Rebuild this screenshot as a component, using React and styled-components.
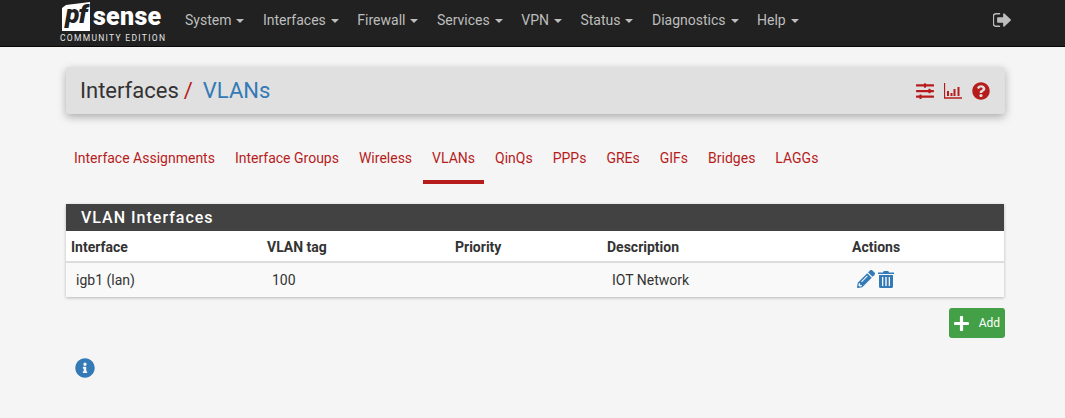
import React from 'react'
import styled, { createGlobalStyle } from 'styled-components'
import { FaSlidersH, FaQuestionCircle, FaPencilAlt, FaPlus, FaInfoCircle } from 'react-icons/fa'

const GlobalStyle = createGlobalStyle`
	html, body {
		margin: 0;
		padding: 0;
		background: #f5f5f5;
		font-family: Roboto, "Liberation Sans", sans-serif;
		font-size: 14px;
		color: #333;
	}
`

const Page = styled.div`
	width: 1065px;
	height: 418px;
	overflow: hidden;
`

const NavBar = styled.nav`
	height: 46px;
	background: #212121;
	border-bottom: 1px solid #080808;
	display: flex;
	align-items: flex-start;
	padding-left: 60px;
	padding-right: 54px;
`

const Logo = styled.div`
	width: 106px;
	height: 46px;
	color: #fff;
	flex: none;
`

const LogoMark = styled.div`
	display: flex;
	align-items: flex-start;
	height: 31px;
	padding: 2px 0 0 2px;
`

const LogoBox = styled.span`
	width: 28px;
	height: 29px;
	background: #fff;
	color: #212121;
	font: italic 900 26px/25px Roboto, sans-serif;
	letter-spacing: -1px;
	text-align: center;
	clip-path: polygon(4px 3px, 28px 0, 28px 29px, 0 29px, 0 6px);
`

const LogoWord = styled.span`
	font: 900 25px/30px Roboto, sans-serif;
	margin-left: 3px;
	letter-spacing: 0.3px;
`

const LogoEdition = styled.div`
	font: 400 8.5px/10px Roboto, sans-serif;
	letter-spacing: 1.3px;
	white-space: nowrap;
	color: #e4e4e4;
`

const NavMenu = styled.ul`
	display: flex;
	list-style: none;
	margin: 0 0 0 9.75px;
	padding: 0;
	flex: 1;
`

const NavItem = styled.li`
	padding: 0 9.25px;
	line-height: 41px;
	color: #bdbdbd;
	white-space: nowrap;
`

const Caret = styled.span`
	display: inline-block;
	width: 0;
	height: 0;
	margin-left: 5px;
	vertical-align: middle;
	border-top: 4px solid #bdbdbd;
	border-left: 4px solid transparent;
	border-right: 4px solid transparent;
`

const Logout = styled.div`
	color: #bdbdbd;
	height: 39px;
	display: flex;
	align-items: center;
`

const Content = styled.main`
	padding: 20px 0 0 66px;
	width: 938px;
`

const TitleBar = styled.header`
	height: 47px;
	margin-right: -1px;
	background: #e0e0e0;
	border-radius: 3px;
	box-shadow: 0 3px 8px rgba(0, 0, 0, 0.3);
	display: flex;
	align-items: center;
	justify-content: space-between;
	padding: 0 15px 0 14px;
`

const Crumbs = styled.h1`
	margin: 0;
	font-size: 22px;
	font-weight: 400;
	color: #333;
	line-height: 47px;
`

const Slash = styled.span`
	color: #b71c1c;
	margin: 0 10px 0 5px;
`

const CrumbLink = styled.span`
	color: #337ab7;
`

const TitleIcons = styled.div`
	display: flex;
	align-items: center;
	gap: 10px;
	color: #b71c1c;
	font-size: 18px;
`

const IconWrap = styled.span`
	display: flex;
`

const Tabs = styled.ul`
	display: flex;
	list-style: none;
	margin: 23px 0 0 -2px;
	padding: 0;
	height: 47px;
`

const Tab = styled.li`
	padding: 0 9px;
	margin: 0 1px;
	color: #b71c1c;
	line-height: 43px;
	height: 47px;
	box-sizing: border-box;
	border-bottom: 4px solid ${p => (p.$active ? '#b71c1c' : 'transparent')};
	white-space: nowrap;
`

const Panel = styled.section`
	margin-top: 20px;
	background: #fff;
	box-shadow: 0 1px 3px rgba(0, 0, 0, 0.25);
`

const PanelHeading = styled.h2`
	margin: 0;
	height: 27px;
	background: #424242;
	color: #fff;
	font-size: 16px;
	font-weight: 500;
	line-height: 27px;
	letter-spacing: 1px;
	padding-left: 15px;
`

const Table = styled.table`
	width: 100%;
	border-collapse: collapse;
	table-layout: fixed;
`

const Th = styled.th`
	box-sizing: border-box;
	width: ${p => p.$width || 'auto'};
	text-align: left;
	padding: 1px 5px 0;
	height: 31px;
	font-weight: 700;
	color: #333;
	border-bottom: 2px solid #ddd;
`

const Td = styled.td`
	background: #f9f9f9;
	padding: 0 10px 1px;
	height: 33px;
	color: #333;
`

const ActionIcons = styled.div`
	display: flex;
	align-items: center;
	gap: 3px;
	color: #337ab7;
	font-size: 18px;
	padding-bottom: 2px;
`

const Footer = styled.div`
	display: flex;
	justify-content: flex-end;
	margin-top: 11px;
	margin-right: -1px;
`

const AddButton = styled.button`
	width: 56px;
	height: 30px;
	border: none;
	border-radius: 3px;
	background: #43a047;
	color: #fff;
	font: 400 12px Roboto, sans-serif;
	display: flex;
	align-items: center;
	justify-content: space-between;
	padding: 0 5px 0 4px;
`

const InfoIcon = styled.div`
	margin: 20px 0 0 9px;
	color: #337ab7;
	font-size: 20px;
	display: flex;
`

const SignOutIcon = () => (
	<svg width="18" height="14" viewBox="96 256 1536 1280" preserveAspectRatio="none">
		<path
			fill="currentColor"
			d="M704 1440q0 4 1 20t.5 26.5-3 23.5-10 19.5-20.5 6.5h-320q-119 0-203.5-84.5t-84.5-203.5v-704q0-119 84.5-203.5t203.5-84.5h320q13 0 22.5 9.5t9.5 22.5q0 4 1 20t.5 26.5-3 23.5-10 19.5-20.5 6.5h-320q-66 0-113 47t-47 113v704q0 66 47 113t113 47h288l11.5 1 11.5 3 8 5.5 7 9 2 13.5zm928-544q0 26-19 45l-544 544q-19 19-45 19t-45-19-19-45v-288h-448q-26 0-45-19t-19-45v-384q0-26 19-45t45-19h448v-288q0-26 19-45t45-19 45 19l544 544q19 19 19 45z"
		/>
	</svg>
)

const ChartIcon = () => (
	<svg width="18" height="16" viewBox="0 0 18 16" fill="none">
		<path d="M0.5 0v15h17.5" stroke="currentColor" strokeWidth="1.3" />
		<path d="M4 8v5M7.5 10v3M10.5 6v7M14.5 4v9" stroke="currentColor" strokeWidth="2" />
	</svg>
)

const TrashIcon = () => (
	<svg width="16" height="18" viewBox="0 0 16 18">
		<path
			fill="currentColor"
			fillRule="evenodd"
			d="M0 2.5h5L5.7 1h4.6l.7 1.5h5V4H0zM1 5h14v11.5a1.5 1.5 0 0 1-1.5 1.5h-11A1.5 1.5 0 0 1 1 16.5zM4 7v9h1.3V7zM7.3 7v9h1.4V7zM10.7 7v9H12V7z"
		/>
	</svg>
)

const menu = ['System', 'Interfaces', 'Firewall', 'Services', 'VPN', 'Status', 'Diagnostics', 'Help']
const tabs = ['Interface Assignments', 'Interface Groups', 'Wireless', 'VLANs', 'QinQs', 'PPPs', 'GREs', 'GIFs', 'Bridges', 'LAGGs']

const App = () => {
	return (
		<Page>
			<GlobalStyle />
			<NavBar>
				<Logo>
					<LogoMark>
						<LogoBox>pf</LogoBox>
						<LogoWord>sense</LogoWord>
					</LogoMark>
					<LogoEdition>COMMUNITY EDITION</LogoEdition>
				</Logo>
				<NavMenu>
					{menu.map(item => (
						<NavItem key={item}>
							{item}
							<Caret />
						</NavItem>
					))}
				</NavMenu>
				<Logout>
					<SignOutIcon />
				</Logout>
			</NavBar>
			<Content>
				<TitleBar>
					<Crumbs>
						Interfaces
						<Slash>/</Slash>
						<CrumbLink>VLANs</CrumbLink>
					</Crumbs>
					<TitleIcons>
						<IconWrap>
							<FaSlidersH />
						</IconWrap>
						<ChartIcon />
						<IconWrap>
							<FaQuestionCircle />
						</IconWrap>
					</TitleIcons>
				</TitleBar>
				<Tabs>
					{tabs.map(tab => (
						<Tab key={tab} $active={tab === 'VLANs'}>
							{tab}
						</Tab>
					))}
				</Tabs>
				<Panel>
					<PanelHeading>VLAN Interfaces</PanelHeading>
					<Table>
						<thead>
							<tr>
								<Th $width="196px">Interface</Th>
								<Th $width="188px">VLAN tag</Th>
								<Th $width="152px">Priority</Th>
								<Th $width="245px">Description</Th>
								<Th>Actions</Th>
							</tr>
						</thead>
						<tbody>
							<tr>
								<Td>igb1 (lan)</Td>
								<Td>100</Td>
								<Td />
								<Td>IOT Network</Td>
								<Td>
									<ActionIcons>
										<FaPencilAlt />
										<TrashIcon />
									</ActionIcons>
								</Td>
							</tr>
						</tbody>
					</Table>
				</Panel>
				<Footer>
					<AddButton>
						<FaPlus size={17} />
						Add
					</AddButton>
				</Footer>
				<InfoIcon>
					<FaInfoCircle />
				</InfoIcon>
			</Content>
		</Page>
	)
}

export default App
